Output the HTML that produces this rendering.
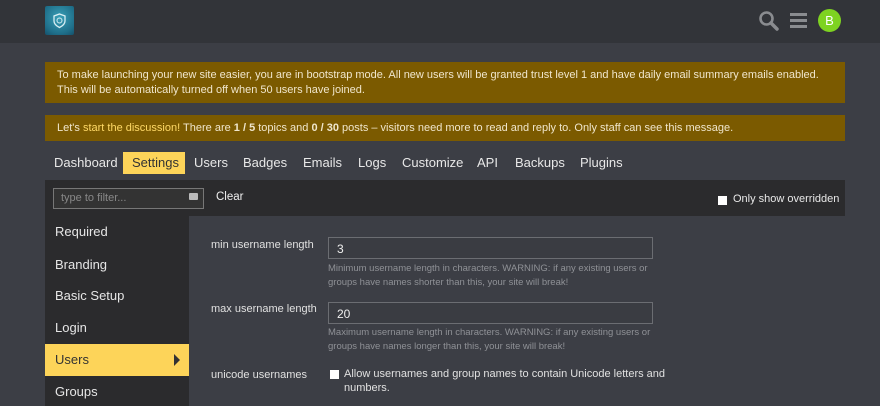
<!DOCTYPE html>
<html><head><meta charset="utf-8"><style>
*{box-sizing:border-box;margin:0;padding:0}
body{width:880px;height:402px;overflow:hidden;background:#3c3e45;font-family:"Liberation Sans",Arial,sans-serif;color:#ddd;position:relative}
.hdr{position:absolute;left:0;top:0;width:880px;height:43px;background:#323439}
.logo{position:absolute;left:45px;top:6px;width:29px;height:29px;background:radial-gradient(circle at 50% 40%,#3aa0b8,#1f6f8a 70%,#15506a);border-radius:2px}
.ban{position:absolute;left:45px;width:800px;background:#7b5a00;color:#f0e6cc;font-size:11px;line-height:15px;padding:0 12px}
.nav{position:absolute;top:152px;left:45px;height:22px;font-size:13px;color:#e8e8e8}
.nav span{position:absolute;top:3px;white-space:nowrap}
.fbar{position:absolute;left:45px;top:180px;width:800px;height:36px;background:#2b2b2d}
.side{position:absolute;left:45px;top:216px;width:144px;height:190px;background:#2b2b2d}
.side div{position:absolute;left:10px;font-size:13px;color:#e6e6e6}
.lbl{position:absolute;left:211px;font-size:11px;color:#e0e0e0}
.inp{position:absolute;left:328px;width:325px;height:22px;border:1px solid #6b6d72;background:#3a3c42;font-size:12px;padding:4px 8px;color:#eee}
.help{position:absolute;left:328px;font-size:9.5px;line-height:13.5px;color:#8f9196;width:340px}
</style></head><body>
<div class="hdr"></div>
<div class="logo"><svg width="29" height="29" viewBox="0 0 29 29"><path d="M14.5 8 L20 10 V15 C20 18 17.5 20 14.5 21.5 C11.5 20 9 18 9 15 V10 Z" fill="none" stroke="#d8eef3" stroke-width="1.3"/><circle cx="14.5" cy="14.5" r="2.5" fill="none" stroke="#d8eef3" stroke-width="1"/></svg></div>
<svg style="position:absolute;left:758px;top:10px" width="22" height="22" viewBox="0 0 22 22"><circle cx="8.5" cy="8.5" r="6" fill="none" stroke="#8a8c90" stroke-width="2.6"/><path d="M13 13 L19 19" stroke="#8a8c90" stroke-width="3.5" stroke-linecap="round"/></svg>
<div style="position:absolute;left:790px;top:13px;width:17px;height:3px;background:#8a8c90;box-shadow:0 6px 0 #8a8c90,0 12px 0 #8a8c90"></div>
<div style="position:absolute;left:818px;top:9px;width:23px;height:23px;border-radius:50%;background:#7ed321;color:#fff;font-size:13px;text-align:center;line-height:23px">B</div>
<div class="ban" style="top:62px;height:41px;padding-top:6px">To make launching your new site easier, you are in bootstrap mode. All new users will be granted trust level 1 and have daily email summary emails enabled. This will be automatically turned off when 50 users have joined.</div>
<div class="ban" style="top:115px;height:26px;padding-top:6px">Let's <span style="color:#ffd966">start the discussion!</span> There are <b>1 / 5</b> topics and <b>0 / 30</b> posts – visitors need more to read and reply to. Only staff can see this message.</div>
<div style="position:absolute;left:123px;top:152px;width:62px;height:22px;background:#fdd459"></div>
<div class="nav"><span style="left:9px">Dashboard</span><span style="left:87px;color:#333">Settings</span><span style="left:149px">Users</span><span style="left:198px">Badges</span><span style="left:258px">Emails</span><span style="left:313px">Logs</span><span style="left:357px">Customize</span><span style="left:432px">API</span><span style="left:470px">Backups</span><span style="left:535px">Plugins</span></div>
<div class="fbar"></div>
<div style="position:absolute;left:53px;top:188px;width:151px;height:21px;border:1px solid #777;background:#333;font-size:11px;color:#888;padding:3px 7px">type to filter...</div>
<div style="position:absolute;left:189px;top:193px;width:9px;height:7px;background:#bbb;border-radius:1px"></div>
<div style="position:absolute;left:216px;top:191px;font-size:11.5px;color:#eee">Clear</div>
<div style="position:absolute;left:718px;top:196px;width:9px;height:9px;background:#fff"></div>
<div style="position:absolute;left:733px;top:193px;font-size:11px;color:#e8e8e8">Only show overridden</div>
<div class="side">
<div style="top:8px">Required</div><div style="top:41px">Branding</div><div style="top:72px">Basic Setup</div><div style="top:104px">Login</div>
<div style="left:0;top:128px;width:144px;height:32px;background:#fdd459"></div>
<div style="top:136px;color:#333">Users</div>
<div style="left:129px;top:138px;width:0;height:0;border-left:6px solid #333;border-top:6px solid transparent;border-bottom:6px solid transparent"></div>
<div style="top:168px">Groups</div>
</div>
<div class="lbl" style="top:239px">min username length</div>
<div class="inp" style="top:237px">3</div>
<div class="help" style="top:262px">Minimum username length in characters. WARNING: if any existing users or groups have names shorter than this, your site will break!</div>
<div class="lbl" style="top:303px">max username length</div>
<div class="inp" style="top:302px">20</div>
<div class="help" style="top:326px">Maximum username length in characters. WARNING: if any existing users or groups have names longer than this, your site will break!</div>
<div class="lbl" style="top:369px">unicode usernames</div>
<div style="position:absolute;left:330px;top:370px;width:9px;height:9px;background:#fff"></div>
<div style="position:absolute;left:344px;top:367px;font-size:11px;line-height:14px;color:#e0e0e0;width:325px">Allow usernames and group names to contain Unicode letters and numbers.</div>
</body></html>
